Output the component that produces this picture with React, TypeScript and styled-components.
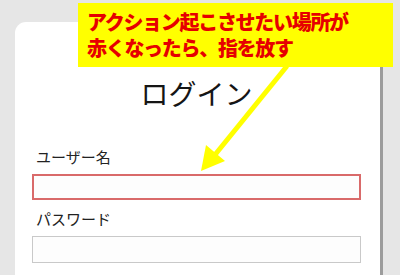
import { createGlobalStyle, styled } from "styled-components";

const GlobalStyle = createGlobalStyle`
  html, body {
    margin: 0;
    padding: 0;
    background: #e6e6e6;
  }
  body {
    font-family: "Noto Sans CJK JP", "Noto Sans", sans-serif;
  }
`;

const Page = styled.div`
  position: relative;
  width: 400px;
  height: 275px;
  overflow: hidden;
  background: #e6e6e6;
  padding: 22px 0 0 15px;
  box-sizing: border-box;
`;

const Card = styled.div`
  width: 368px;
  height: 280px;
  box-sizing: border-box;
  background: #ffffff;
  border-top-left-radius: 11px;
  border-right: 3px solid #9c9c9c;
  padding: 0 19px 0 17px;
  display: flex;
  flex-direction: column;
`;

const Title = styled.h1`
  margin: 53px 0 0;
  font-size: 28px;
  line-height: 36px;
  font-weight: 400;
  color: #151515;
  text-align: center;
`;

const Label = styled.label<{ $top: number }>`
  display: block;
  margin-top: ${(p) => p.$top}px;
  padding-left: 4px;
  font-size: 15px;
  line-height: 22px;
  color: #222;
`;

const Field = styled.input<{ $active?: boolean; $h: number }>`
  display: block;
  margin-top: 6px;
  width: 100%;
  height: ${(p) => p.$h}px;
  box-sizing: border-box;
  background: #fdfdfd;
  border: ${(p) => (p.$active ? "2px solid #d96a6a" : "1px solid #c9c9c9")};
  outline: none;
  padding: 0 6px;
  font-family: inherit;
`;

const Callout = styled.div`
  position: absolute;
  left: 78px;
  top: 3px;
  width: 315px;
  height: 64px;
  box-sizing: border-box;
  background: #ffff00;
  padding: 6px 0 0 9px;
  color: #e60000;
  font-weight: 900;
  font-size: 20px;
  line-height: 26px;
  letter-spacing: -1.3px;
  white-space: nowrap;
`;

const Arrow = styled.svg`
  position: absolute;
  left: 0;
  top: 0;
  pointer-events: none;
`;

export default function App() {
  return (
    <>
      <GlobalStyle />
      <Page>
        <Card>
          <Title>ログイン</Title>
          <Label $top={35}>ユーザー名</Label>
          <Field $active $h={26} />
          <Label $top={8}>パスワード</Label>
          <Field type="password" $h={27} />
        </Card>
        <Callout>
          アクション起こさせたい場所が
          <br />
          赤くなったら、指を放す
        </Callout>
        {/* yellow pointer from the callout to the field */}
        <Arrow width="400" height="275" viewBox="0 0 400 275">
          <line x1="287" y1="66" x2="214" y2="156" stroke="#ffff00" strokeWidth="5" />
          <polygon points="201,171 206,145 225,161" fill="#ffff00" />
        </Arrow>
      </Page>
    </>
  );
}
